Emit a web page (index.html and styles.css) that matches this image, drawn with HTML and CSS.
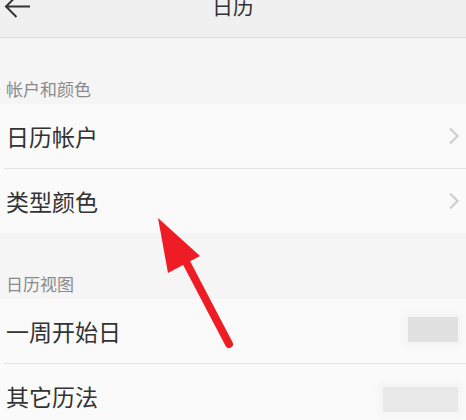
FILE: index.html
```html
<!DOCTYPE html>
<html lang="zh-CN">
<head>
<meta charset="utf-8">
<link rel="stylesheet" href="styles.css">
</head>
<body>
<div class="screen">
  <header class="topbar">
    <svg class="back" width="30" height="37" viewBox="0 0 30 37">
      <path d="M30 6.5H7M16.5 -4L6 6.5L16.5 17" fill="none" stroke="#333" stroke-width="2"/>
    </svg>
    <div class="title">日历</div>
    <div class="spacer"></div>
  </header>

  <div class="section-label">帐户和颜色</div>
  <div class="group">
    <div class="row">
      <span class="row-text">日历帐户</span>
      <svg class="chev" width="12" height="18" viewBox="0 0 12 18"><path d="M2 1.5L9.5 9L2 16.5" fill="none" stroke="#cfcfcf" stroke-width="2.2"/></svg>
    </div>
    <div class="row">
      <span class="row-text">类型颜色</span>
      <svg class="chev" width="12" height="18" viewBox="0 0 12 18"><path d="M2 1.5L9.5 9L2 16.5" fill="none" stroke="#cfcfcf" stroke-width="2.2"/></svg>
    </div>
  </div>

  <div class="section-label">日历视图</div>
  <div class="group">
    <div class="row">
      <span class="row-text">一周开始日</span>
      <span class="blur blur-a"></span>
    </div>
    <div class="row">
      <span class="row-text">其它历法</span>
      <span class="blur blur-b"></span>
    </div>
  </div>

  <svg class="pointer" width="466" height="420" viewBox="0 0 466 420">
    <line x1="229" y1="344" x2="184" y2="258" stroke="#ee1c25" stroke-width="8" stroke-linecap="round"/>
    <polygon points="158,218 168,273 200,256" fill="#ee1c25"/>
  </svg>
</div>
</body>
</html>
```

FILE: styles.css
```css
html, body {
  margin: 0;
  padding: 0;
  background: #f5f5f5;
}
.screen {
  position: relative;
  width: 466px;
  height: 420px;
  overflow: hidden;
  background: #f5f5f5;
  font-family: "Noto Sans CJK SC", "Noto Sans", sans-serif;
  color: #333;
}
.topbar {
  display: flex;
  align-items: flex-start;
  height: 37px;
  background: #f0f0f0;
  border-bottom: 1px solid #dadada;
}
.back {
  display: block;
  flex: 0 0 30px;
}
.title {
  flex: 1;
  text-align: center;
  font-size: 21px;
  line-height: 21px;
  margin-top: -5px;
  color: #333;
}
.spacer {
  flex: 0 0 30px;
}
.section-label {
  height: 66px;
  display: flex;
  align-items: flex-end;
  padding: 0 0 5px 6px;
  box-sizing: border-box;
  font-size: 17px;
  line-height: 20px;
  color: #8a8a8a;
}
.group {
  background: #fafafa;
}
.row {
  height: 64px;
  display: flex;
  align-items: center;
  justify-content: space-between;
  padding: 0 6px 0 6px;
  position: relative;
}
.row + .row {
  border-top: 1px solid #e3e3e3;
  margin-left: 4px;
  padding-left: 2px;
}
.row-text {
  font-size: 23px;
  line-height: 28px;
  color: #333;
}
.chev {
  display: block;
  margin-right: 0;
}
.blur {
  display: block;
  height: 25px;
  margin-right: 2px;
  box-shadow: 0 0 6px 4px rgba(240, 240, 240, 0.6);
}
.blur-a {
  width: 50px;
  background: #e1e1e1;
  margin-top: -4px;
}
.blur-b {
  width: 75px;
  background: #e8e8e8;
  margin-top: 6px;
}
.pointer {
  position: absolute;
  left: 0;
  top: 0;
  pointer-events: none;
}
```
